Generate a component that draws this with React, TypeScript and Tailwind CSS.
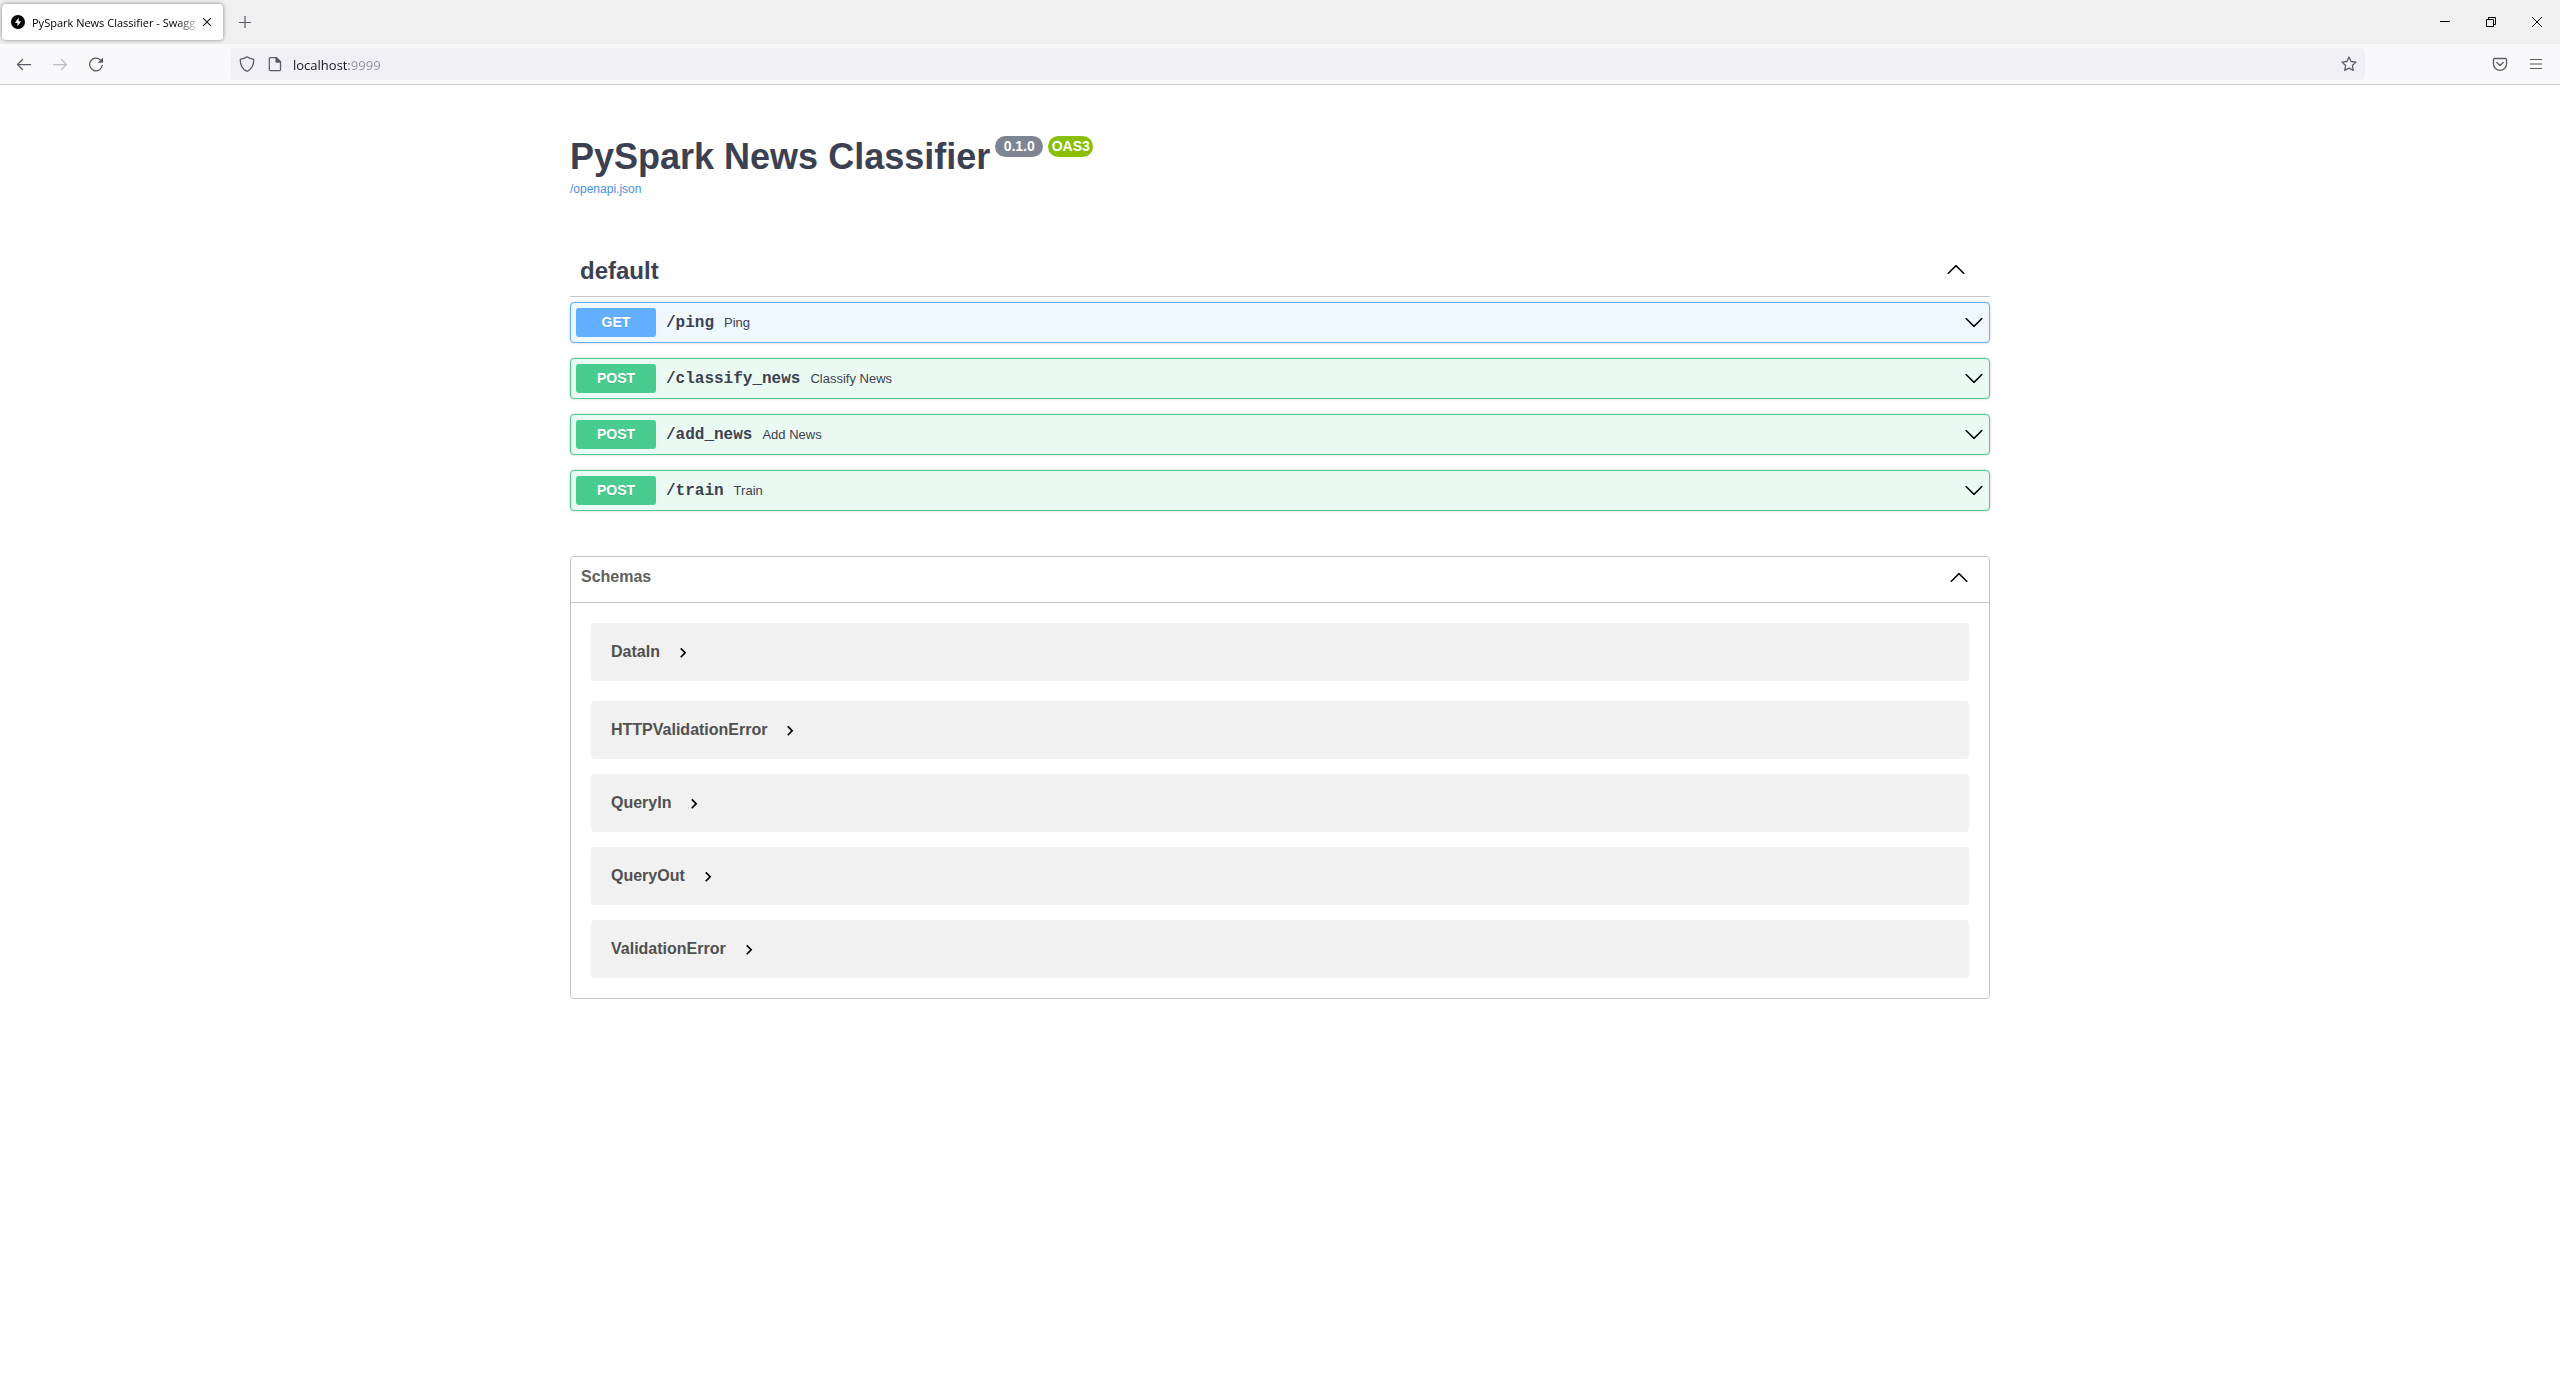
import React, { useState } from "react";

const operations = [
  { method: "GET", path: "/ping", summary: "Ping" },
  { method: "POST", path: "/classify_news", summary: "Classify News" },
  { method: "POST", path: "/add_news", summary: "Add News" },
  { method: "POST", path: "/train", summary: "Train" },
];

const firstSchema = "DataIn";
const otherSchemas = ["HTTPValidationError", "QueryIn", "QueryOut", "ValidationError"];

function ArrowUp() {
  return (
    <svg viewBox="0 0 20 20" className="size-5 shrink-0" fill="#000" aria-hidden="true">
      <path d="M17.418 14.908c.272.268.709.268.979 0s.271-.701 0-.969l-7.908-7.83c-.27-.268-.707-.268-.979 0l-7.908 7.83c-.27.268-.27.701 0 .969.271.268.709.268.979 0L10 7.767l7.418 7.141z" />
    </svg>
  );
}

function ArrowDown() {
  return (
    <svg viewBox="0 1 20 20" className="size-5 shrink-0" fill="#000" aria-hidden="true">
      <path d="M17.418 6.109c.272-.268.709-.268.979 0s.271.701 0 .969l-7.908 7.83c-.27.268-.707.268-.979 0l-7.908-7.83c-.27-.268-.27-.701 0-.969.271-.268.709-.268.979 0L10 13.25l7.418-7.141z" />
    </svg>
  );
}

function TabStrip() {
  return (
    <div className="flex h-11 items-center bg-[#f0f0f0] pl-0.5">
      <div className="flex h-9 w-[221px] items-center rounded bg-white pl-[9px] pr-2 shadow-[0_0_4px_rgba(0,0,0,0.45)]">
        <svg viewBox="0 0 14 14" className="size-3.5 shrink-0" aria-hidden="true">
          <circle cx="7" cy="7" r="7" fill="#000" />
          <path d="M7.6 2.4 3.9 7.9h2.6v3.7l3.7-5.3H7.6z" fill="#fff" />
        </svg>
        <span className="ml-[7px] w-[169px] whitespace-nowrap bg-[linear-gradient(90deg,#000_86%,transparent)] bg-clip-text pt-px text-[11px] leading-4 text-transparent">
          PySpark News Classifier - Swagg
        </span>
        <button type="button" aria-label="Close tab" className="flex h-5 w-3 shrink-0 items-center justify-center">
          <svg viewBox="0 0 8 8" className="size-2" stroke="#15141a" strokeWidth="1.1" aria-hidden="true">
            <path d="m0 0 8 8M8 0 0 8" />
          </svg>
        </button>
      </div>
      <button type="button" aria-label="New tab" className="ml-1 flex h-9 w-9 items-center justify-center">
        <svg viewBox="0 0 12 12" className="size-3" stroke="#5b5b66" strokeWidth="1.2" aria-hidden="true">
          <path d="M6 0v12M0 6.500h12" />
        </svg>
      </button>
      <div className="ml-auto flex h-11">
        <button type="button" aria-label="Minimize" className="flex w-[46px] items-center justify-center">
          <svg viewBox="0 0 10 10" className="size-2.5" aria-hidden="true">
            <path d="M0 4h10v1H0z" />
          </svg>
        </button>
        <button type="button" aria-label="Restore" className="flex w-[46px] items-center justify-center">
          <svg viewBox="0 0 10 10" className="size-2.5" fill="none" stroke="#000" aria-hidden="true">
            <path d="M.5 2.5h7v7h-7zM2.5 2.5v-2h7v7h-2" />
          </svg>
        </button>
        <button type="button" aria-label="Close window" className="flex w-[46px] items-center justify-center">
          <svg viewBox="0 0 10 10" className="size-2.5" stroke="#000" aria-hidden="true">
            <path d="m0 0 10 10M10 0 0 10" />
          </svg>
        </button>
      </div>
    </div>
  );
}

function Toolbar() {
  const [url, setUrl] = useState("localhost:9999");
  return (
    <div className="flex h-[41px] items-center border-b border-[#cccccc] bg-[#f9f9fb] px-1.5">
      <button type="button" aria-label="Back" className="flex h-8 w-9 items-center justify-center">
        <svg viewBox="0 0 16 16" className="size-4" fill="none" stroke="#5b5b66" strokeWidth="1.25" strokeLinecap="round" strokeLinejoin="round" aria-hidden="true">
          <path d="M14.5 8.5h-13M6.5 3.5l-5 5 5 5" />
        </svg>
      </button>
      <button type="button" aria-label="Forward" className="flex h-8 w-9 items-center justify-center">
        <svg viewBox="0 0 16 16" className="size-4" fill="none" stroke="#bdbdc2" strokeWidth="1.25" strokeLinecap="round" strokeLinejoin="round" aria-hidden="true">
          <path d="M1.5 8.5h13M9.5 3.5l5 5-5 5" />
        </svg>
      </button>
      <button type="button" aria-label="Reload" className="flex h-8 w-9 items-center justify-center">
        <svg viewBox="0 0 16 16" className="size-4" fill="none" stroke="#5b5b66" strokeWidth="1.25" strokeLinecap="round" aria-hidden="true">
          <path d="M12.6 4.2a6.3 6.3 0 1 0 1.6 5.2" />
          <path d="M15 1.5v4.7a.6.6 0 0 1-.6.6H9.7z" fill="#5b5b66" stroke="none" />
        </svg>
      </button>
      <div className="mx-[117px] flex h-8 min-w-0 flex-1 items-center rounded bg-[#f0f0f4] px-2">
        <svg viewBox="0 0 16 16" className="size-4 shrink-0" fill="none" stroke="#5b5b66" strokeWidth="1.25" strokeLinejoin="round" aria-hidden="true">
          <path d="M8 .8c2 1.5 4 2.2 6.3 2.4.4 0 .5.3.5.6-.1 5-1.8 9.2-6.2 11.3a1.4 1.4 0 0 1-1.2 0C3 13 1.300 8.800 1.200 3.800c0-.3.1-.6.5-.6C4 3 6 2.300 8 .8z" />
        </svg>
        <svg viewBox="0 0 16 16" className="ml-3 size-4 shrink-0" fill="none" stroke="#5b5b66" strokeWidth="1.25" strokeLinejoin="round" aria-hidden="true">
          <path d="M3.500 1.600h6l4 4v7.800a1.200 1.200 0 0 1-1.200 1.200H3.500a1.200 1.200 0 0 1-1.200-1.200V2.800a1.200 1.200 0 0 1 1.200-1.200z" />
          <path d="M9 1.600v3.900a.6.600 0 0 0 .6.600h3.900z" fill="#5b5b66" />
        </svg>
        <input
          type="text"
          aria-label="Address"
          value={url}
          onChange={(e) => setUrl(e.target.value)}
          className="ml-2.5 h-6 min-w-0 flex-1 bg-[linear-gradient(90deg,#15141a_56px,#8f8f98_56px)] bg-clip-text pt-0.5 text-[13px] text-transparent outline-none"
        />
        <button type="button" aria-label="Bookmark this page" className="flex size-4 shrink-0 items-center justify-center">
          <svg viewBox="0 0 16 16" className="size-4" fill="none" stroke="#5b5b66" strokeWidth="1.3" strokeLinejoin="round" aria-hidden="true">
            <path d="m8 1 2.100 4.500 4.900.600-3.600 3.400.9 4.900L8 12.100l-4.300 2.300.9-4.900L1 6.100l4.900-.6z" />
          </svg>
        </button>
      </div>
      <button type="button" aria-label="Save to Pocket" className="flex h-8 w-9 items-center justify-center">
        <svg viewBox="0 0 16 16" className="size-4" fill="none" stroke="#5b5b66" strokeWidth="1.3" strokeLinecap="round" strokeLinejoin="round" aria-hidden="true">
          <path d="M2.500 2.500h11a1 1 0 0 1 1 1V8a6.500 6.300 0 0 1-13 0V3.500a1 1 0 0 1 1-1z" />
          <path d="M4.800 6.500 8 9.500l3.200-3" />
        </svg>
      </button>
      <button type="button" aria-label="Menu" className="flex h-8 w-9 items-center justify-center">
        <svg viewBox="0 0 16 16" className="size-4" stroke="#5b5b66" strokeWidth="1.2" aria-hidden="true">
          <path d="M2 3.500h12M2 8h12M2 12.500h12" />
        </svg>
      </button>
    </div>
  );
}

function Operation({ method, path, summary }: { method: string; path: string; summary: string }) {
  const get = method === "GET";
  return (
    <button
      type="button"
      className={
        "flex w-full items-center rounded border p-[5px] text-left shadow-[0_0_3px_rgba(0,0,0,0.19)] " +
        (get ? "border-[#61affe] bg-[#eff7ff]" : "border-[#49cc90] bg-[#ebf9f3]")
      }
    >
      <span
        className={
          "w-20 rounded-[3px] text-center text-sm leading-[29px] font-bold text-white [text-shadow:0_1px_0_rgba(0,0,0,0.1)] " +
          (get ? "bg-[#61affe]" : "bg-[#49cc90]")
        }
      >
        {method}
      </span>
      <span className="px-2.5 font-['Liberation_Mono',monospace] text-base leading-5 font-bold">{path}</span>
      <span className="flex-1 text-[13px] leading-5">{summary}</span>
      <ArrowDown />
    </button>
  );
}

function Model({ name }: { name: string }) {
  return (
    <div className="flex h-[58px] items-center rounded bg-[#f1f1f1] px-5">
      <button type="button" className="flex items-center gap-[13px] text-base leading-5 font-bold text-[#505050]">
        {name}
        <svg viewBox="0 -1 24 24" className="size-5" fill="#000" aria-hidden="true">
          <path d="M10 6 8.590 7.410 13.170 12l-4.580 4.590L10 18l6-6z" />
        </svg>
      </button>
    </div>
  );
}

export default function App() {
  return (
    <div className="min-h-screen bg-white font-['Liberation_Sans',Arial,sans-serif] text-[#3b4151]">
      <header className="font-['Open_Sans','Noto_Sans',sans-serif]">
        <TabStrip />
        <Toolbar />
      </header>
      <main className="mx-auto max-w-[1460px] px-5 pt-[51px] pb-12">
        <div className="flex items-start gap-[5px]">
          <h1 className="text-4xl leading-[42px] font-bold">PySpark News Classifier</h1>
          <span className="w-12 rounded-full bg-[#7d8492] text-center text-sm leading-[21px] font-bold text-white">
            0.1.0
          </span>
          <span className="w-[45px] rounded-full bg-[#89bf04] text-center text-sm leading-[21px] font-bold text-white">
            OAS3
          </span>
        </div>
        <a href="/openapi.json" className="mt-1 block w-fit text-xs leading-[14px] text-[#4990e2]">
          /openapi.json
        </a>

        <section className="mt-[50px]">
          <button type="button" className="flex h-[51px] w-full items-center justify-between border-b border-[#c4c6cb] pr-6 pl-2.5">
            <h2 className="text-2xl leading-7 font-bold">default</h2>
            <span className="pb-1">
              <ArrowUp />
            </span>
          </button>
          <div className="mt-[5px] flex flex-col gap-[15px]">
            {operations.map((op) => (
              <Operation key={op.path} {...op} />
            ))}
          </div>
        </section>

        <section className="mt-[45px] rounded border border-[#c4c6cb]">
          <button type="button" className="flex w-full items-center justify-between border-b border-[#c4c6cb] pt-2.5 pr-5 pb-[15px] pl-2.5">
            <h2 className="text-base leading-5 font-bold text-[#606060]">Schemas</h2>
            <ArrowUp />
          </button>
          <div className="p-5">
            <Model name={firstSchema} />
            <div className="mt-5 flex flex-col gap-[15px]">
              {otherSchemas.map((name) => (
                <Model key={name} name={name} />
              ))}
            </div>
          </div>
        </section>
      </main>
    </div>
  );
}
